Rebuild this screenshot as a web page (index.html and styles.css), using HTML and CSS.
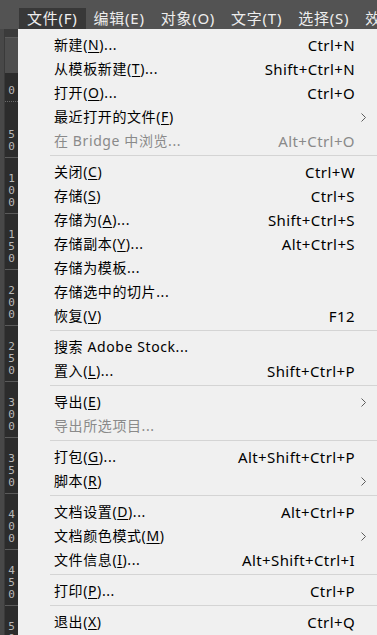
FILE: index.html
```html
<!DOCTYPE html>
<html lang="zh-CN">
<head>
    <meta charset="UTF-8">
    <meta name="viewport" content="width=device-width, initial-scale=1.0">
    <title>文件菜单</title>
    <link rel="stylesheet" href="styles.css">
</head>
<body>
    <div class="menubar">
        <span class="menu-title active">文件(F)</span>
        <span class="menu-title">编辑(E)</span>
        <span class="menu-title">对象(O)</span>
        <span class="menu-title">文字(T)</span>
        <span class="menu-title">选择(S)</span>
        <span class="menu-title">效果(C)</span>
    </div>

    <div class="workspace">
        <!-- left strip with the vertical ruler -->
        <div class="side">
            <div class="strip"></div>
            <div class="ruler-col">
                <div class="ruler-top"></div>
                <div class="ruler-box"></div>
                <div class="ruler">
                    <div class="cell first"><span>0</span></div>
                    <div class="cell"><span>5</span><span>0</span></div>
                    <div class="cell"><span>1</span><span>0</span><span>0</span></div>
                    <div class="cell"><span>1</span><span>5</span><span>0</span></div>
                    <div class="cell"><span>2</span><span>0</span><span>0</span></div>
                    <div class="cell"><span>2</span><span>5</span><span>0</span></div>
                    <div class="cell"><span>3</span><span>0</span><span>0</span></div>
                    <div class="cell"><span>3</span><span>5</span><span>0</span></div>
                    <div class="cell"><span>4</span><span>0</span><span>0</span></div>
                    <div class="cell"><span>4</span><span>5</span><span>0</span></div>
                    <div class="cell"><span>5</span><span>0</span><span>0</span></div>
                </div>
            </div>
        </div>

        <ul class="menu">
            <li class="item"><span class="label">新建(<u>N</u>)...</span><span class="key">Ctrl+N</span><span class="sub"></span></li>
            <li class="item"><span class="label">从模板新建(<u>T</u>)...</span><span class="key">Shift+Ctrl+N</span><span class="sub"></span></li>
            <li class="item"><span class="label">打开(<u>O</u>)...</span><span class="key">Ctrl+O</span><span class="sub"></span></li>
            <li class="item"><span class="label">最近打开的文件(<u>F</u>)</span><span class="key"></span><span class="sub"><svg width="5" height="9" viewBox="0 0 5 9"><polyline points="0.5,0.5 4.5,4.5 0.5,8.5" /></svg></span></li>
            <li class="item disabled"><span class="label">在 Bridge 中浏览...</span><span class="key">Alt+Ctrl+O</span><span class="sub"></span></li>
            <li class="sep"></li>
            <li class="item"><span class="label">关闭(<u>C</u>)</span><span class="key">Ctrl+W</span><span class="sub"></span></li>
            <li class="item"><span class="label">存储(<u>S</u>)</span><span class="key">Ctrl+S</span><span class="sub"></span></li>
            <li class="item"><span class="label">存储为(<u>A</u>)...</span><span class="key">Shift+Ctrl+S</span><span class="sub"></span></li>
            <li class="item"><span class="label">存储副本(<u>Y</u>)...</span><span class="key">Alt+Ctrl+S</span><span class="sub"></span></li>
            <li class="item"><span class="label">存储为模板...</span><span class="key"></span><span class="sub"></span></li>
            <li class="item"><span class="label">存储选中的切片...</span><span class="key"></span><span class="sub"></span></li>
            <li class="item"><span class="label">恢复(<u>V</u>)</span><span class="key">F12</span><span class="sub"></span></li>
            <li class="sep"></li>
            <li class="item"><span class="label">搜索 Adobe Stock...</span><span class="key"></span><span class="sub"></span></li>
            <li class="item"><span class="label">置入(<u>L</u>)...</span><span class="key">Shift+Ctrl+P</span><span class="sub"></span></li>
            <li class="sep"></li>
            <li class="item"><span class="label">导出(<u>E</u>)</span><span class="key"></span><span class="sub"><svg width="5" height="9" viewBox="0 0 5 9"><polyline points="0.5,0.5 4.5,4.5 0.5,8.5" /></svg></span></li>
            <li class="item disabled"><span class="label">导出所选项目...</span><span class="key"></span><span class="sub"></span></li>
            <li class="sep"></li>
            <li class="item"><span class="label">打包(<u>G</u>)...</span><span class="key">Alt+Shift+Ctrl+P</span><span class="sub"></span></li>
            <li class="item"><span class="label">脚本(<u>R</u>)</span><span class="key"></span><span class="sub"><svg width="5" height="9" viewBox="0 0 5 9"><polyline points="0.5,0.5 4.5,4.5 0.5,8.5" /></svg></span></li>
            <li class="sep"></li>
            <li class="item"><span class="label">文档设置(<u>D</u>)...</span><span class="key">Alt+Ctrl+P</span><span class="sub"></span></li>
            <li class="item"><span class="label">文档颜色模式(<u>M</u>)</span><span class="key"></span><span class="sub"><svg width="5" height="9" viewBox="0 0 5 9"><polyline points="0.5,0.5 4.5,4.5 0.5,8.5" /></svg></span></li>
            <li class="item"><span class="label">文件信息(<u>I</u>)...</span><span class="key">Alt+Shift+Ctrl+I</span><span class="sub"></span></li>
            <li class="sep"></li>
            <li class="item"><span class="label">打印(<u>P</u>)...</span><span class="key">Ctrl+P</span><span class="sub"></span></li>
            <li class="sep"></li>
            <li class="item"><span class="label">退出(<u>X</u>)</span><span class="key">Ctrl+Q</span><span class="sub"></span></li>
        </ul>
    </div>
</body>
</html>
```

FILE: styles.css
```css
html, body {
    margin: 0;
    padding: 0;
    height: 100%;
    overflow: hidden;
}

body {
    background: #535353;
    font-family: "Noto Sans", "Noto Sans CJK SC", sans-serif;
}

/* top menu bar */
.menubar {
    height: 29px;
    display: flex;
    align-items: flex-end;
    padding-left: 19px;
    white-space: nowrap;
}

.menu-title {
    height: 21px;
    line-height: 20px;
    padding: 0 8px;
    font-size: 15px;
    letter-spacing: 0.75px;
    color: #eeeeee;
}

.menu-title.active {
    background: #383838;
}

.workspace {
    display: flex;
    height: calc(100% - 29px);
}

/* left ruler */
.side {
    width: 18px;
    flex-shrink: 0;
    display: flex;
}

.strip {
    width: 4px;
    background: #484848;
    border-right: 1px solid #3a3a3a;
}

.ruler-col {
    flex: 1;
    display: flex;
    flex-direction: column;
    background: #2c2c2c;
}

.ruler-top {
    height: 8px;
    background: #3b3b3b;
}

.ruler-box {
    height: 35px;
    background: #4e4e4e;
    border-top: 1px solid #5c5c5c;
}

.ruler {
    flex: 1;
    overflow: hidden;
}

.cell {
    height: 56px;
    box-sizing: border-box;
    border-bottom: 1px solid #5a5a5a;
    display: flex;
    flex-direction: column;
    justify-content: flex-end;
    align-items: center;
    padding-bottom: 4px;
    font-family: "DejaVu Sans Mono", monospace;
    font-size: 11px;
    line-height: 12px;
    color: #b8b8b8;
}

.cell.first {
    margin-top: -27px;
    border-bottom: 1px dotted #6a6a6a;
}

/* dropdown menu */
.menu {
    flex: 1;
    margin: 0;
    padding: 4px 0 0 0;
    list-style: none;
    background: #f0f0f0;
    font-size: 14px;
    color: #000;
}

.item {
    display: flex;
    align-items: center;
    height: 24px;
    line-height: 24px;
    padding-left: 36px;
    white-space: nowrap;
}

.label {
    flex: 1;
    letter-spacing: 0.6px;
}

.label u {
    text-underline-offset: 2px;
}

.key {
    font-size: 15px;
    letter-spacing: 0.4px;
}

.sub {
    width: 22px;
    flex-shrink: 0;
    padding-left: 6px;
    box-sizing: border-box;
    display: flex;
    align-items: center;
    padding-top: 1px;
}

.sub polyline {
    fill: none;
    stroke: #5c5c5c;
    stroke-width: 1;
}

.disabled {
    color: #8a8a8a;
}

.sep {
    height: 1px;
    margin: 2px 0 4px 32px;
    background: #d4d4d4;
}
```
